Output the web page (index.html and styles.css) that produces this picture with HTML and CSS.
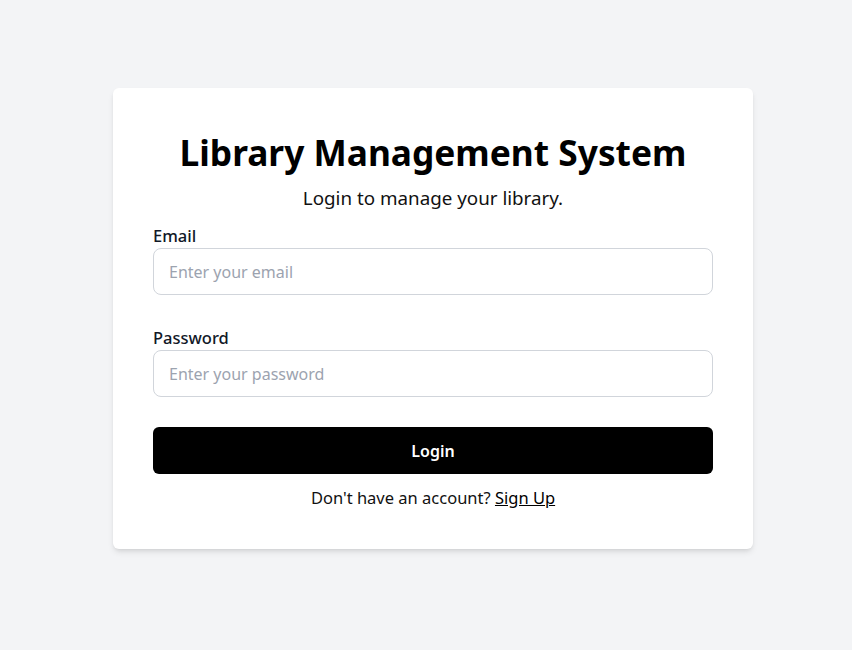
FILE: index.html
```html
<!DOCTYPE html>
<html lang="en">
<head>
<meta charset="utf-8">
<title>Library Management System</title>
<link rel="stylesheet" href="styles.css">
</head>
<body>
<main class="page">
  <section class="card">
    <h1 class="title">Library Management System</h1>
    <p class="subtitle">Login to manage your library.</p>
    <form class="form">
      <div class="field">
        <label class="label" for="email">Email</label>
        <input class="input" id="email" type="email" placeholder="Enter your email">
      </div>
      <div class="field">
        <label class="label" for="password">Password</label>
        <input class="input" id="password" type="password" placeholder="Enter your password">
      </div>
      <button class="button" type="button">Login</button>
    </form>
    <p class="footer">Don't have an account? <a class="link" href="#">Sign Up</a></p>
  </section>
</main>
</body>
</html>
```

FILE: styles.css
```css
* { box-sizing: border-box; }
html, body { margin: 0; padding: 0; }
body {
  background: #f3f4f6;
  font-family: "Noto Sans", "Open Sans", sans-serif;
  color: #111827;
}
.page {
  display: flex;
  justify-content: center;
  align-items: flex-start;
  padding: 88px 0 0 14px;
  min-height: 650px;
}
.card {
  width: 640px;
  background: #ffffff;
  border-radius: 6px;
  box-shadow: 0 4px 6px -1px rgba(0,0,0,0.1), 0 2px 4px -2px rgba(0,0,0,0.1);
  padding: 40px 40px 39px;
}
.title {
  margin: 4px 0 0;
  font-size: 35.3px;
  line-height: 40px;
  font-weight: 700;
  text-align: center;
  color: #000;
}
.subtitle {
  margin: 12px 0 12px;
  font-size: 18.8px;
  line-height: 28px;
  text-align: center;
  color: #111;
}
.form { display: flex; flex-direction: column; }
.field { display: flex; flex-direction: column; margin-bottom: 31px; }
.field:nth-child(2) { margin-bottom: 30px; }
.label {
  font-size: 16.5px;
  line-height: 24px;
  font-weight: 500;
  color: #111827;
}
.input {
  height: 47px;
  border: 1px solid #d1d5db;
  border-radius: 8px;
  padding: 0 15px;
  font-family: inherit;
  font-size: 16px;
  color: #111827;
  background: #fff;
  outline: none;
}
.input::placeholder { color: #9ca3af; }
.button {
  height: 47px;
  border: none;
  border-radius: 6px;
  background: #000;
  color: #fff;
  font-family: inherit;
  font-size: 16px;
  font-weight: 600;
  cursor: pointer;
}
.footer {
  margin: 12px 0 0;
  font-size: 16.5px;
  line-height: 24px;
  text-align: center;
  color: #111;
}
.link { color: #000; text-decoration: underline; }
```
